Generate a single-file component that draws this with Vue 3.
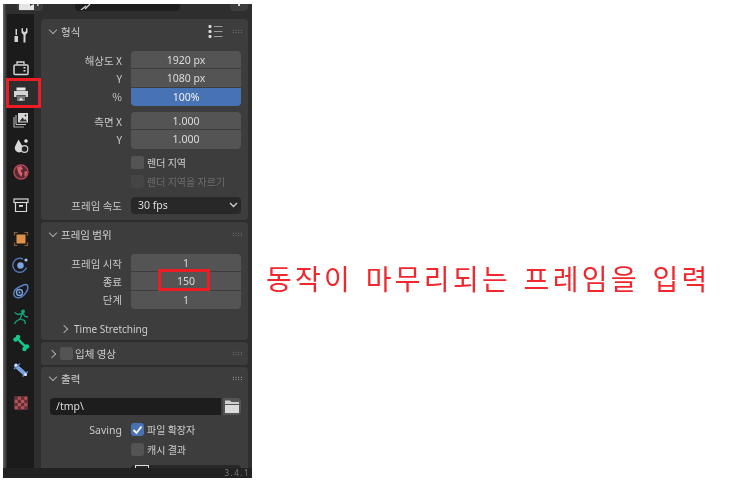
<template>
  <div class="page">
    <div class="blender">
      <div class="topbar">
        <div class="top-btn">
          <svg width="22" height="6" viewBox="0 0 22 6"><path d="M2 0h11v2l4-2v6H2z" fill="#e4e4e4"/><rect x="20" y="0" width="1.500" height="2" fill="#ccc"/></svg>
        </div>
        <div class="top-search">
          <svg width="12" height="6" viewBox="0 0 12 6"><path d="M1 6l5-4M5 5l5-5" stroke="#d8d8d8" stroke-width="1.200" fill="none"/></svg>
        </div>
        <div class="top-pin"><span></span></div>
      </div>
      <div class="main">
        <nav class="tabs">
          <div v-for="(group, g) in tabGroups" :key="g" class="tab-group">
            <div
              v-for="tab in group"
              :key="tab.name"
              class="tab"
              :class="{ active: tab.name === 'output' }"
              :style="{ height: tab.h + 'px' }"
            >
              <svg width="18" height="18" viewBox="0 0 18 18" v-html="tab.svg"></svg>
            </div>
          </div>
        </nav>
        <div class="panels">
          <section class="panel format">
            <header class="panel-head">
              <span class="chev down"></span>
              <span class="title">형식</span>
              <svg class="presets" width="15" height="13" viewBox="0 0 15 13">
                <g fill="#dcdcdc"><rect x="0.500" y="0" width="3" height="3" rx="1"/><rect x="0.500" y="5" width="3" height="3" rx="1"/><rect x="0.500" y="10" width="3" height="3" rx="1"/></g>
                <g stroke="#9c9c9c" stroke-width="1"><path d="M6 1.500h8.500M6 6.500h8.500M6 11.500h8.500"/></g>
              </svg>
              <span class="grip"></span>
            </header>
            <div class="fields">
              <div class="row"><label>해상도 X</label><div class="field first">1920 px</div></div>
              <div class="row"><label>Y</label><div class="field">1080 px</div></div>
              <div class="row"><label>%</label><div class="field last blue">100%</div></div>
            </div>
            <div class="fields short">
              <div class="row"><label>측면 X</label><div class="field first">1.000</div></div>
              <div class="row"><label>Y</label><div class="field last">1.000</div></div>
            </div>
            <div class="checks">
              <div class="check-row"><span class="check"></span><span>렌더 지역</span></div>
              <div class="check-row dim"><span class="check"></span><span>렌더 지역을 자르기</span></div>
            </div>
            <div class="row select-row">
              <label>프레임 속도</label>
              <div class="select">
                <span>30 fps</span>
                <svg width="9" height="6" viewBox="0 0 9 6"><path d="M1 1l3.500 3.500L8 1" fill="none" stroke="#cfcfcf" stroke-width="1.300"/></svg>
              </div>
            </div>
          </section>

          <section class="panel range">
            <header class="panel-head">
              <span class="chev down"></span>
              <span class="title">프레임 범위</span>
              <span class="grip push"></span>
            </header>
            <div class="fields">
              <div class="row"><label>프레임 시작</label><div class="field first">1</div></div>
              <div class="row"><label>종료</label><div class="field">150</div></div>
              <div class="row"><label>단계</label><div class="field last">1</div></div>
            </div>
            <div class="sub-head"><span class="chev right"></span><span>Time Stretching</span></div>
            <div class="mark mark-end"></div>
          </section>

          <section class="panel stereo">
            <header class="panel-head">
              <span class="chev right"></span>
              <span class="check small"></span>
              <span class="title">입체 영상</span>
              <span class="grip push"></span>
            </header>
          </section>

          <section class="panel output">
            <header class="panel-head">
              <span class="chev down"></span>
              <span class="title">출력</span>
              <span class="grip push strong"></span>
            </header>
            <div class="path-row">
              <div class="path">/tmp\</div>
              <div class="folder">
                <svg width="14" height="13" viewBox="0 0 14 13"><path d="M0 0.500h5l1.500 1.500H14v2H0z" fill="#cfcfcf"/><path d="M0 5h14v8H0z" fill="#dcdcdc"/></svg>
              </div>
            </div>
            <div class="check-row saving first-save">
              <label>Saving</label>
              <span class="check on">
                <svg width="11" height="10" viewBox="0 0 11 10"><path d="M1.500 5l3 3 5-6.500" fill="none" stroke="#fff" stroke-width="1.800"/></svg>
              </span>
              <span>파일 확장자</span>
            </div>
            <div class="check-row saving">
              <label></label>
              <span class="check"></span>
              <span>캐시 결과</span>
            </div>
            <div class="row cut-row">
              <label>파일 형식</label>
              <div class="cut-select"><span class="cut-box"></span></div>
            </div>
          </section>
        </div>
      </div>
      <footer class="status"><span>3.4.1</span></footer>
      <div class="mark mark-tab"></div>
    </div>
    <p class="note">동작이 마무리되는 프레임을 입력</p>
  </div>
</template>

<script setup>
const tabGroups = [
  [{ name: "tool", h: 34, svg: '<g fill="#d4d4d4"><rect x="2.500" y="10" width="3.500" height="6"/><rect x="3.500" y="3" width="1.500" height="6"/><path d="M9.500 2.500l1.500-.5 0 3 1.500 1.200 1.500-1.200 0-3 1.500.5 0 4-2 2.500 0 7.500-2 0 0-7.500-2-2.500z"/></g>' }],
  [
    { name: "render", h: 26, svg: '<rect x="2" y="6" width="14" height="9.500" rx="1" fill="none" stroke="#d4d4d4" stroke-width="1.500"/><path d="M5 5.500V3h7v2.500" fill="none" stroke="#d4d4d4" stroke-width="1.300"/><rect x="11.500" y="8" width="2" height="1.500" fill="#d4d4d4"/><rect x="11.500" y="11" width="2" height="1.500" fill="#d4d4d4"/>' },
    { name: "output", h: 26, svg: '<path d="M4.500 2.500h9v3h-9z" fill="#e8e8e8"/><path d="M2 6h14v6h-2.500v-2h-9v2H2z" fill="#d4d4d4"/><path d="M5 10.500h8v5.500H5z" fill="#777"/><path d="M6.500 15.500l2.500-3 2.500 3z" fill="#ddd"/>' },
    { name: "layer", h: 26, svg: '<path d="M2 6v10h10" fill="none" stroke="#a8a8a8" stroke-width="1.200"/><path d="M4 4v9.500h10" fill="none" stroke="#c4c4c4" stroke-width="1"/><rect x="6" y="2" width="10" height="9.500" fill="#d6d6d6"/><path d="M7.500 10.500l3-4 2 2.500 1-1 1.500 2.500z" fill="#333"/><circle cx="13.500" cy="4.500" r="1" fill="#333"/>' },
    { name: "scene", h: 26, svg: '<path d="M6.500 2.500l3.500 6a4 4.500 0 0 1-1 6.500 4.500 4.500 0 0 1-6-2.500 4.500 4.500 0 0 1 .5-4z" fill="#d8d8d8"/><circle cx="14" cy="4" r="1.800" fill="#e4e4e4"/><circle cx="12.500" cy="12" r="3.300" fill="#222" stroke="#cfcfcf" stroke-width="1.200"/>' },
    { name: "world", h: 26, svg: '<circle cx="9" cy="9" r="7" fill="#512a31" stroke="#b94a57" stroke-width="1.400"/><path d="M5 4.500l4-1.500 2 3-2.500 1.500 2 3-1 3.500-3-3.500zM12.500 8.500l2.500-.5-.5 4-2 1.500z" fill="#d9606b"/>' },
  ],
  [{ name: "collection", h: 34, svg: '<rect x="2" y="3" width="14" height="3.500" fill="none" stroke="#d8d8d8" stroke-width="1.200"/><path d="M3.500 6.500v9h11v-9" fill="none" stroke="#d8d8d8" stroke-width="1.200"/><rect x="7" y="9" width="4" height="1.800" fill="#e4e4e4"/>' }],
  [
    { name: "object", h: 27, svg: '<rect x="4.500" y="4.500" width="9" height="9" fill="#dc9248"/><path d="M2.500 5.500v-3h3M12.500 2.500h3v3M15.500 12.500v3h-3M5.500 15.500h-3v-3" fill="none" stroke="#8a6038" stroke-width="1.200"/>' },
    { name: "particles", h: 26, svg: '<path d="M14.500 11.500a7 7 0 1 1-3.500-8.500" fill="none" stroke="#5277b8" stroke-width="1.400"/><circle cx="8.500" cy="9.500" r="3.200" fill="#7ea4e6"/><circle cx="14" cy="4" r="1.600" fill="#a9c4f2"/>' },
    { name: "physics", h: 26, svg: '<path d="M15.500 3.500c1 3-1 7-3.500 9.500s-6 3.500-8.500 2-2-5.500 0-7.500 5-3 7-4 4-1.500 5 0z" fill="none" stroke="#5c84cc" stroke-width="1.400"/><circle cx="7.500" cy="10.500" r="3" fill="none" stroke="#7ea4e6" stroke-width="1.300"/><circle cx="7.500" cy="10.500" r="1" fill="#7ea4e6"/>' },
    { name: "constraints", h: 26, svg: '<g fill="none" stroke="#14a67a" stroke-width="1.300"><circle cx="11" cy="3.500" r="1.300" fill="#14a67a"/><path d="M2.500 4.500l3.500 2 5-1 2 3 3 .5M10 6.500l-2 4.500-4 2.500-1.500 2.500M8 11l4.500 1.500 1 3.500"/></g>' },
    { name: "data", h: 26, svg: '<g fill="#14c98f"><circle cx="3.500" cy="5.500" r="2.200"/><circle cx="6" cy="3" r="2.200"/><circle cx="15" cy="12.500" r="2.200"/><circle cx="12.500" cy="15" r="2.200"/><path d="M4.500 5.500l2-1.500 8 8-1.500 2z"/></g>' },
    { name: "bone", h: 27, svg: '<path d="M4 5l9 8" stroke="#7ba0e0" stroke-width="4" stroke-linecap="round"/><path d="M2 8l6-5.500M10.500 15.500l5.500-5" stroke="#5c84cc" stroke-width="1.500" fill="none"/><circle cx="4" cy="4" r="1.500" fill="#dce7f8"/><circle cx="13.500" cy="13.500" r="1.500" fill="#dce7f8"/>' },
  ],
  [{ name: "texture", h: 33, svg: '<rect x="2.500" y="2.500" width="13" height="13" fill="#b5525c"/><g fill="#5e2f35"><rect x="2.500" y="2.500" width="3.250" height="3.250"/><rect x="9" y="2.500" width="3.250" height="3.250"/><rect x="5.750" y="5.750" width="3.250" height="3.250"/><rect x="12.250" y="5.750" width="3.250" height="3.250"/><rect x="2.500" y="9" width="3.250" height="3.250"/><rect x="9" y="9" width="3.250" height="3.250"/><rect x="5.750" y="12.250" width="3.250" height="3.250"/><rect x="12.250" y="12.250" width="3.250" height="3.250"/></g>' }],
];
</script>

<style>
html, body {
  margin: 0;
  background: #fff;
}
</style>

<style scoped>
.page {
  width: 743px;
  height: 481px;
  display: flex;
  padding: 4px 0 0 3px;
  box-sizing: border-box;
  background: #fff;
  overflow: hidden;
  font-family: "Noto Sans CJK KR", "Noto Sans", sans-serif;
  filter: blur(0.4px);
}
.blender {
  position: relative;
  width: 249px;
  height: 474px;
  flex: none;
  display: flex;
  flex-direction: column;
  background: #2e2e2e;
  color: #cdcdcd;
  font-size: 10.500px;
  overflow: hidden;
}
.topbar {
  height: 10px;
  flex: none;
  position: relative;
  display: flex;
  padding-left: 14px;
}
.top-btn {
  width: 26px;
  height: 7px;
  background: #3d3d3d;
  border-radius: 0 0 4px 4px;
}
.top-btn svg {
  display: block;
}
.top-search {
  width: 105px;
  margin-left: 32px;
  height: 7px;
  padding-left: 5px;
  box-sizing: border-box;
  background: #1d1d1d;
  border-radius: 0 0 4px 4px;
}
.top-search svg {
  display: block;
}
.top-pin {
  width: 18px;
  height: 7px;
  margin-left: 50px;
  background: #3d3d3d;
  border-radius: 0 0 4px 4px;
  display: flex;
  justify-content: center;
}
.top-pin span {
  width: 2px;
  height: 2px;
  background: #ddd;
}
.main {
  flex: 1;
  display: flex;
  min-height: 0;
}
.tabs {
  width: 27px;
  margin-left: 4px;
  flex: none;
  padding-top: 4px;
  background: #1b1b1b;
  display: flex;
  flex-direction: column;
  gap: 3px;
}
.tabs::before {
  content: "";
  position: absolute;
  left: 0;
  top: 0;
  bottom: 0;
  width: 4px;
  background: linear-gradient(90deg, #666, #262626);
}
.tab {
  display: flex;
  align-items: center;
  justify-content: center;
}
.tab.active {
  background: #2e2e2e;
}
.panels {
  flex: 1;
  min-width: 0;
  padding: 5px 4px 0 7px;
  display: flex;
  flex-direction: column;
  gap: 2px;
}
.panel {
  position: relative;
  flex: none;
  background: #3d3d3d;
  border-radius: 4px;
  padding-right: 7px;
}
.format { height: 201px; }
.range { height: 118px; }
.stereo { height: 23px; }
.output { flex: 1; }
.panel-head {
  height: 24px;
  display: flex;
  align-items: center;
  gap: 5px;
  padding-left: 8px;
}
.stereo .panel-head { height: 23px; }
.output .panel-head { height: 22px; }
.chev {
  width: 6px;
  height: 6px;
  flex: none;
  border-right: 1px solid #a8a8a8;
  border-bottom: 1px solid #a8a8a8;
  box-sizing: border-box;
}
.chev.down { transform: translateY(-1px) rotate(45deg); margin: 0 1px; }
.chev.right { transform: rotate(-45deg); }
.title {
  margin-left: -1px;
}
.presets {
  margin-left: auto;
  margin-right: 4px;
}
.grip {
  width: 11px;
  height: 5px;
  flex: none;
  margin-right: -2px;
  background-image: radial-gradient(circle, #8a8a8a 0.7px, transparent 0.8px);
  background-size: 2.700px 2.500px;
}
.grip.push { margin-left: auto; }
.grip.strong {
  background-image: radial-gradient(circle, #c4c4c4 0.7px, transparent 0.8px);
}
.fields {
  margin-top: 8px;
}
.fields.short {
  margin-top: 6px;
}
.row {
  display: grid;
  grid-template-columns: 81px 1fr;
  column-gap: 9px;
  align-items: center;
}
.row label {
  text-align: right;
  color: #c8c8c8;
}
.field {
  height: 18.330px;
  line-height: 18px;
  box-sizing: border-box;
  border-bottom: 1px solid #3d3d3d;
  background: #545454;
  text-align: center;
  font-family: "Noto Sans", sans-serif;
  color: #dcdcdc;
}
.field.first { border-radius: 4px 4px 0 0; }
.field.last { border-radius: 0 0 4px 4px; border-bottom: 0; }
.field.blue { background: #4772b3; color: #f0f0f0; }
.checks {
  margin-top: 4.500px;
}
.check-row {
  display: flex;
  align-items: center;
  gap: 3px;
  height: 19px;
  padding-left: 90px;
  font-size: 10px;
}
.check {
  width: 13px;
  height: 13px;
  flex: none;
  background: #545454;
  border-radius: 3px;
  display: flex;
  align-items: center;
  justify-content: center;
}
.check.on { background: #4772b3; }
.check.small {
  margin-right: -2px;
}
.dim { color: #6c6c6c; }
.dim .check { background: #454545; }
.select-row { margin-top: 5.500px; }
.select {
  height: 17px;
  display: flex;
  align-items: center;
  justify-content: space-between;
  padding: 0 3px 0 7px;
  background: #282828;
  border-radius: 4px;
  font-family: "Noto Sans", sans-serif;
  color: #dcdcdc;
}
.sub-head {
  display: flex;
  align-items: center;
  gap: 7px;
  height: 16px;
  margin-top: 12px;
  padding-left: 20px;
  font-family: "Noto Sans", sans-serif;
  font-size: 10px;
  color: #cdcdcd;
}
.path-row {
  display: flex;
  gap: 2px;
  padding: 9px 0 0 9px;
}
.path {
  flex: 1;
  height: 17px;
  line-height: 17px;
  padding-left: 6px;
  background: #1d1d1d;
  border-radius: 4px 0 0 4px;
  font-family: "Noto Sans", sans-serif;
  color: #dcdcdc;
}
.folder {
  width: 18px;
  height: 17px;
  display: flex;
  align-items: center;
  justify-content: center;
  background: #545454;
  border-radius: 0 4px 4px 0;
}
.saving {
  padding-left: 0;
  margin-top: 1px;
}
.first-save {
  margin-top: 5px;
}
.saving label {
  width: 81px;
  margin-right: 6px;
  text-align: right;
  font-family: "Noto Sans", sans-serif;
  font-size: 10.500px;
  color: #c8c8c8;
}
.cut-row {
  margin-top: 6px;
}
.cut-select {
  height: 17px;
  padding-left: 4px;
  background: #282828;
  border-radius: 4px 4px 0 0;
}
.cut-box {
  display: block;
  width: 14px;
  height: 10px;
  box-sizing: border-box;
  border: 1px solid #ddd;
}
.status {
  position: absolute;
  left: 0;
  right: 0;
  bottom: 0;
  height: 10px;
  overflow: hidden;
  background: #222;
  text-align: right;
  padding-right: 2px;
  font-family: "Noto Sans", sans-serif;
  font-size: 8px;
  line-height: 10px;
  letter-spacing: 1.500px;
  color: #7c7c7c;
}
.mark {
  position: absolute;
  border: 3px solid #ee1c25;
  box-sizing: border-box;
}
.mark-tab {
  left: 3px;
  top: 74px;
  width: 35px;
  height: 30px;
}
.mark-end {
  left: 117px;
  top: 47px;
  width: 52px;
  height: 22px;
}
.note {
  margin: 254px 0 0 14px;
  height: 40px;
  line-height: 40px;
  white-space: nowrap;
  font-size: 28px;
  font-weight: 400;
  letter-spacing: 3.300px;
  word-spacing: 3px;
  color: #f0282d;
}
</style>
